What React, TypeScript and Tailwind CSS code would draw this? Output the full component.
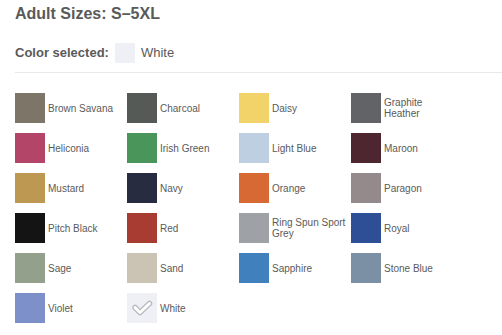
const colors: { name: string; hex: string; selected?: boolean }[] = [
  { name: "Brown Savana", hex: "#7d7568" },
  { name: "Charcoal", hex: "#565a56" },
  { name: "Daisy", hex: "#f2d36a" },
  { name: "Graphite Heather", hex: "#626366" },
  { name: "Heliconia", hex: "#b34568" },
  { name: "Irish Green", hex: "#4a955a" },
  { name: "Light Blue", hex: "#bfcfe2" },
  { name: "Maroon", hex: "#4e2630" },
  { name: "Mustard", hex: "#bd9852" },
  { name: "Navy", hex: "#272c40" },
  { name: "Orange", hex: "#d76a34" },
  { name: "Paragon", hex: "#958a8b" },
  { name: "Pitch Black", hex: "#141414" },
  { name: "Red", hex: "#a83c32" },
  { name: "Ring Spun Sport Grey", hex: "#9ea1a5" },
  { name: "Royal", hex: "#2e4f95" },
  { name: "Sage", hex: "#93a18c" },
  { name: "Sand", hex: "#cbc4b5" },
  { name: "Sapphire", hex: "#3f80bd" },
  { name: "Stone Blue", hex: "#7b8fa5" },
  { name: "Violet", hex: "#7e90c9" },
  { name: "White", hex: "#eff0f5", selected: true },
];

const Swatch = ({ hex, selected }: { hex: string; selected?: boolean }) => (
  <div
    className="w-[30px] h-[30px] shrink-0 flex items-center justify-center"
    style={{ backgroundColor: hex }}
  >
    {selected && (
      <svg width="30" height="30" viewBox="0 0 30 30">
        <polyline
          points="8,14.5 13,19.5 22.5,10.5"
          fill="none"
          stroke="#b9b9bd"
          strokeWidth="5.5"
          strokeLinecap="round"
          strokeLinejoin="round"
        />
        <polyline
          points="8,14.5 13,19.5 22.5,10.5"
          fill="none"
          stroke="#ffffff"
          strokeWidth="3"
          strokeLinecap="round"
          strokeLinejoin="round"
        />
      </svg>
    )}
  </div>
);

export default function App() {
  return (
    <div className="w-[502px] h-[335px] bg-white pl-[15px] pt-[4px] font-['Liberation_Sans',Arial,sans-serif] text-[#5a5a5a] overflow-hidden">
      <h2 className="text-[16px] font-bold leading-[20px]">
        Adult Sizes: S–5XL
      </h2>

      <div className="mt-[19px] flex items-center h-[20px]">
        <span className="text-[13px] font-bold">Color selected:</span>
        <div className="ml-[6px] w-[20px] h-[20px] bg-[#eff0f5]" />
        <span className="ml-[6px] text-[13px]">White</span>
      </div>

      <div className="mt-[9px] h-px bg-[#e8e8e8]" />

      <div className="mt-[20px] grid grid-cols-[repeat(4,112px)] gap-y-[10px]">
        {colors.map((c) => (
          <div key={c.name} className="flex items-center gap-[3px]">
            <Swatch hex={c.hex} selected={c.selected} />
            <span className="w-[76px] text-[10px] leading-[11px]">
              {c.name}
            </span>
          </div>
        ))}
      </div>
    </div>
  );
}
